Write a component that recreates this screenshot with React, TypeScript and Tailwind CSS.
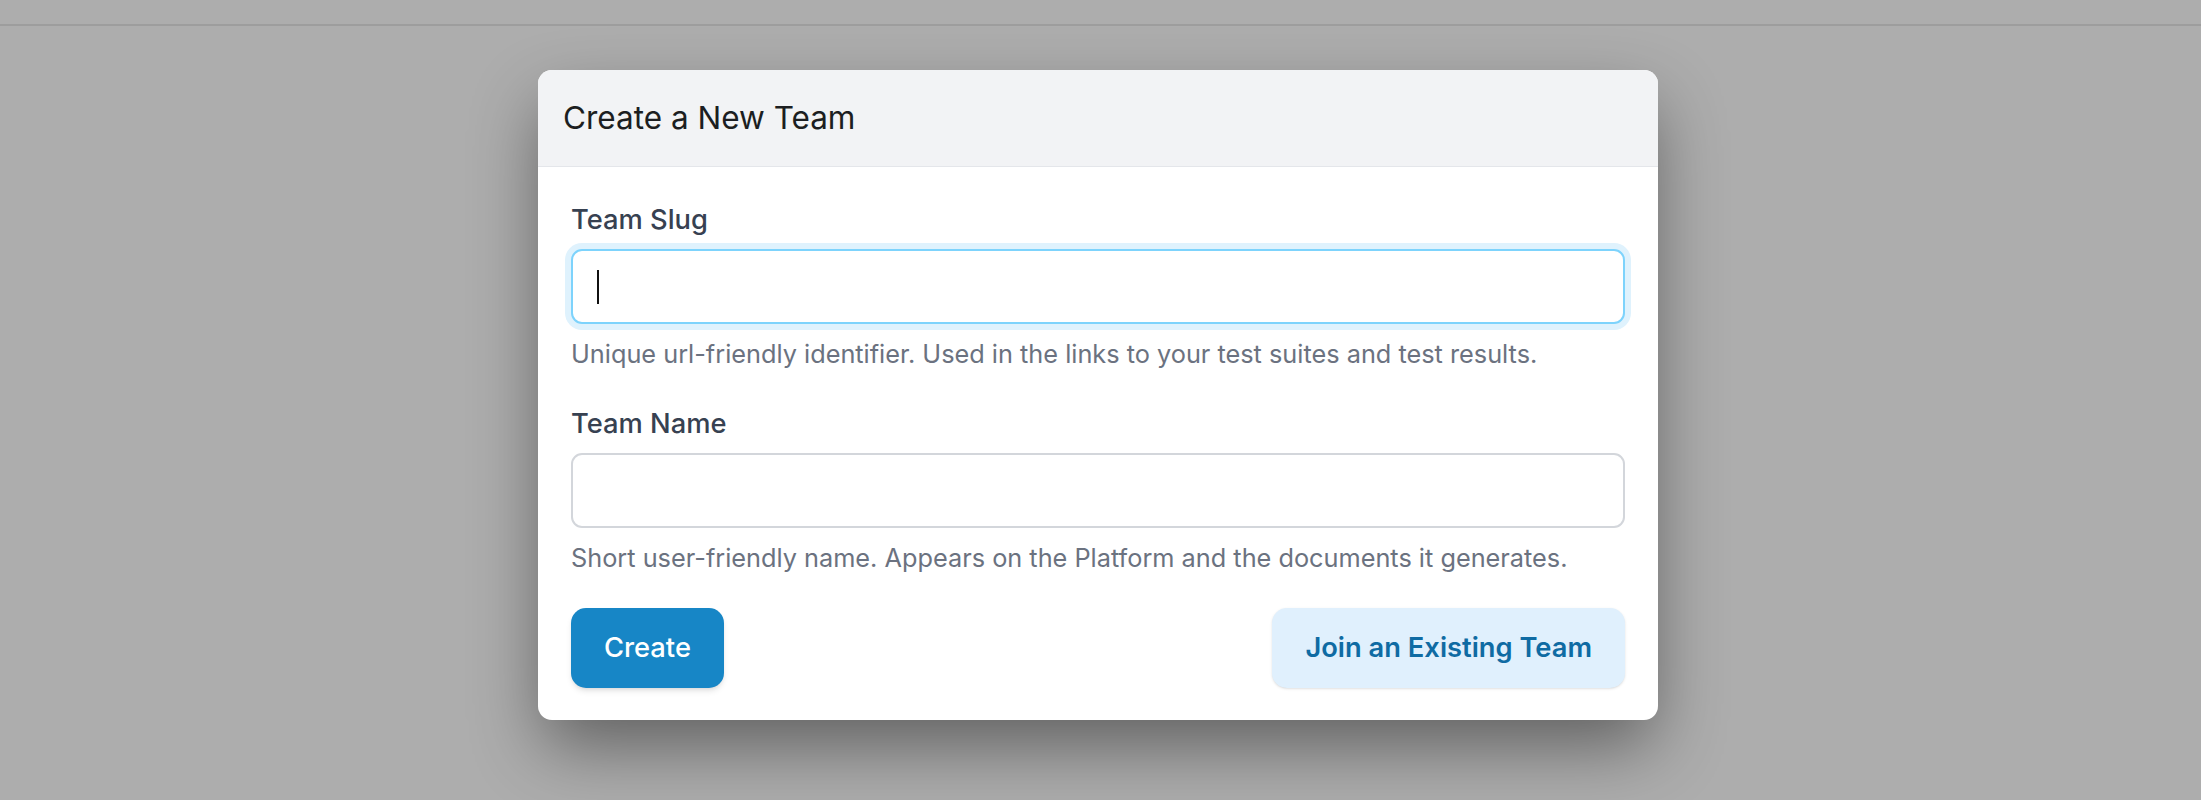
import React from "react";

function Field({
  label,
  hint,
  focused,
}: {
  label: string;
  hint: string;
  focused?: boolean;
}) {
  return (
    <div className="flex flex-col">
      <label className="text-[27.3px] leading-[40px] font-medium text-[#374151]">{label}</label>
      <div
        className={
          focused
            ? "mt-[9px] flex h-[75px] items-center rounded-[11px] border-2 border-[#7dd3fc] bg-white pl-[24px] pr-4 ring-[6px] ring-[#dff2fd]"
            : "mt-[9px] flex h-[75px] items-center rounded-[11px] border-2 border-[#d3d6db] bg-white pl-[24px] pr-4"
        }
      >
        {focused && <span className="h-[34px] w-[2px] bg-[#111]" />}
        <input
          type="text"
          className="h-full flex-1 bg-transparent text-[28px] text-[#111827] outline-none"
        />
      </div>
      <p className="mt-[12px] text-[25.3px] leading-[35px] text-[#6b7280]">{hint}</p>
    </div>
  );
}

export default function App() {
  return (
    <div
      className="min-h-[800px] w-full bg-[#adadad]"
      style={{ fontFamily: "Inter, 'Noto Sans', sans-serif" }}
    >
      <div className="h-[26px] border-b-2 border-[#9d9d9d]" />

      <div className="mt-[44px] flex justify-center pr-[5px]">
        <div className="w-[1120px] overflow-hidden rounded-[14px] bg-white shadow-[0_30px_70px_-5px_rgba(0,0,0,0.45)]">
          <div className="flex h-[97px] items-center border-b border-[#e4e6ea] bg-[#f2f3f5] px-[25px]">
            <h2 className="text-[31.5px] font-normal text-[#1c1e21]">Create a New Team</h2>
          </div>

          <div className="flex flex-col px-[33px] pt-[33px] pb-[32px]">
            <Field
              label="Team Slug"
              hint="Unique url-friendly identifier. Used in the links to your test suites and test results."
              focused
            />
            <div className="mt-[33px]">
              <Field
                label="Team Name"
                hint="Short user-friendly name. Appears on the Platform and the documents it generates."
              />
            </div>

            <div className="mt-[33px] flex items-center justify-between">
              <button className="h-[80px] rounded-[15px] bg-[#1786c6] px-[33px] text-[27.3px] font-medium text-white shadow-md">
                Create
              </button>
              <button className="h-[80px] rounded-[15px] bg-[#e0f0fd] px-[33px] text-[27.3px] font-semibold text-[#0f6ba3] shadow-sm">
                Join an Existing Team
              </button>
            </div>
          </div>
        </div>
      </div>
    </div>
  );
}
